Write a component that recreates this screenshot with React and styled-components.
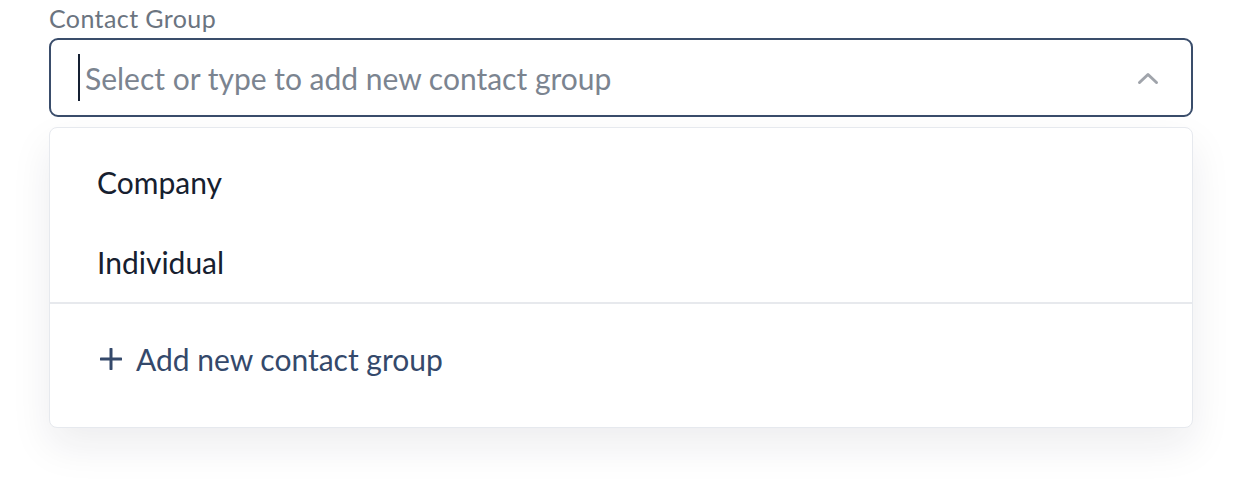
import React from "react";
import styled, { createGlobalStyle } from "styled-components";

const GlobalStyle = createGlobalStyle`
  body {
    margin: 0;
    background: #ffffff;
    font-family: "Lato", "Open Sans", sans-serif;
  }
`;

const Field = styled.div`
  padding: 3px 49px 60px 49px;
  width: 1144px;
`;

const Label = styled.div`
  font-size: 25px;
  line-height: 30px;
  letter-spacing: 0.4px;
  color: #6b7480;
  margin-bottom: 5px;
`;

const InputBox = styled.div`
  box-sizing: border-box;
  height: 79px;
  border: 2px solid #3a4d6b;
  border-radius: 9px;
  display: flex;
  align-items: center;
  padding: 0 32px 0 27px;
`;

const Caret = styled.span`
  width: 2px;
  height: 47px;
  background: #152033;
  margin-right: 5px;
`;

const Placeholder = styled.span`
  flex: 1;
  font-size: 30px;
  color: #7b8490;
`;

const Menu = styled.div`
  box-sizing: border-box;
  margin-top: 10px;
  height: 301px;
  border: 1px solid #e6e9ee;
  border-radius: 8px;
  background: #fff;
  box-shadow: 0 18px 40px rgba(20, 30, 50, 0.08);
  overflow: hidden;
`;

const Options = styled.div`
  padding-top: 14px;
`;

const Option = styled.div`
  height: 80px;
  display: flex;
  align-items: center;
  padding-left: 47px;
  font-size: 30px;
  color: #16202f;
`;

const Divider = styled.div`
  height: 2px;
  background: #e7e9ed;
`;

const AddRow = styled.div`
  height: 80px;
  margin-top: 15px;
  display: flex;
  align-items: center;
  padding-left: 50px;
  font-size: 30px;
  color: #34496b;
  gap: 14px;
`;

const Chevron = () => (
  <svg width="22" height="14" viewBox="0 0 22 14" fill="none">
    <path
      d="M2.5 11.5 L11 3.5 L19.5 11.5"
      stroke="#a0a4ab"
      strokeWidth="3"
      strokeLinecap="round"
      strokeLinejoin="round"
    />
  </svg>
);

const Plus = () => (
  <svg width="22" height="22" viewBox="0 0 22 22" fill="none">
    <path
      d="M11 1 V21 M1 11 H21"
      stroke="#34496b"
      strokeWidth="3"
      strokeLinecap="round"
    />
  </svg>
);

export default function App() {
  return (
    <>
      <GlobalStyle />
      <Field>
        <Label>Contact Group</Label>
        <InputBox>
          <Caret />
          <Placeholder>Select or type to add new contact group</Placeholder>
          <Chevron />
        </InputBox>
        <Menu>
          <Options>
            <Option>Company</Option>
            <Option>Individual</Option>
          </Options>
          <Divider />
          <AddRow>
            <Plus />
            Add new contact group
          </AddRow>
        </Menu>
      </Field>
    </>
  );
}
